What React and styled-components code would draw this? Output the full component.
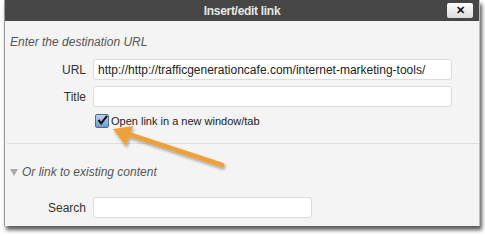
import styled, { createGlobalStyle } from "styled-components";

const GlobalStyle = createGlobalStyle`
  html, body {
    margin: 0;
    padding: 0;
    background: #fff;
  }
  body {
    font-family: "Liberation Sans", Arial, sans-serif;
  }
`;

export default function App() {
  return (
    <>
      <GlobalStyle />
      <Page>
        <Dialog>
          <Header>
            <HeaderTitle>Insert/edit link</HeaderTitle>
            <CloseButton>✕</CloseButton>
          </Header>
          <Body>
            <Section>
              <Hint>Enter the destination URL</Hint>
              <FieldGrid>
                <Label>URL</Label>
                <TextInput
                  defaultValue="http://http://trafficgenerationcafe.com/internet-marketing-tools/"
                  $width="359px"
                />
                <Label>Title</Label>
                <TextInput defaultValue="" $width="359px" />
                <span />
                <CheckRow>
                  <CheckBox>
                    <svg width="11" height="10" viewBox="0 0 11 10">
                      <path
                        d="M1.5 5 L4.2 8.3 L10 0.8"
                        fill="none"
                        stroke="#111"
                        strokeWidth="2"
                      />
                    </svg>
                  </CheckBox>
                  <CheckLabel>Open link in a new window/tab</CheckLabel>
                </CheckRow>
              </FieldGrid>
            </Section>
            <Divider />
            <Section $top="20px">
              <Toggle>
                <Triangle />
                <Hint>Or link to existing content</Hint>
              </Toggle>
              <FieldGrid $top="17px">
                <Label>Search</Label>
                <TextInput defaultValue="" $width="219px" />
              </FieldGrid>
            </Section>
          </Body>
          <Arrow width="130" height="60" viewBox="0 0 130 60">
            <defs>
              <filter id="sh" x="-20%" y="-40%" width="140%" height="180%">
                <feDropShadow dx="1" dy="2" stdDeviation="1.5" floodColor="#000" floodOpacity="0.35" />
              </filter>
            </defs>
            <g filter="url(#sh)">
              <line x1="117" y1="43" x2="20" y2="11" stroke="#eea13a" strokeWidth="5" strokeLinecap="round" />
              <polygon points="8,7 28,4 21,24" fill="#eea13a" />
            </g>
          </Arrow>
        </Dialog>
      </Page>
    </>
  );
}

const Page = styled.div`
  width: 485px;
  height: 236px;
  padding-left: 4px;
  box-sizing: border-box;
`;

const Dialog = styled.div`
  position: relative;
  width: 476px;
  height: 226px;
  background: #f4f4f4;
  border-left: 1px solid #9a9a9a;
  border-right: 1px solid #bdbdbd;
  box-sizing: border-box;
  box-shadow: 2px 4px 4px rgba(0, 0, 0, 0.65);
  display: flex;
  flex-direction: column;
`;

const Header = styled.div`
  height: 21px;
  background: #464646;
  display: flex;
  align-items: center;
  justify-content: center;
  position: relative;
`;

const HeaderTitle = styled.span`
  color: #e6e6e6;
  font-size: 12px;
  font-weight: bold;
  letter-spacing: -0.3px;
`;

const CloseButton = styled.span`
  position: absolute;
  right: 6px;
  top: 3px;
  width: 26px;
  height: 15px;
  border-radius: 2px;
  background: linear-gradient(#fdfdfd, #dcdcdc);
  color: #111;
  font-size: 11px;
  font-weight: bold;
  display: flex;
  align-items: center;
  justify-content: center;
  line-height: 1;
`;

const Body = styled.div`
  display: flex;
  flex-direction: column;
  padding-top: 13px;
`;

const Section = styled.div`
  padding: ${(p) => p.$top || "0"} 0 0 5px;
`;

const Hint = styled.div`
  font-size: 12px;
  font-style: italic;
  color: #555;
  line-height: 16px;
`;

const FieldGrid = styled.div`
  display: grid;
  grid-template-columns: 76px auto;
  column-gap: 7px;
  row-gap: 6px;
  align-items: center;
  margin-top: ${(p) => p.$top || "9px"};
`;

const Label = styled.div`
  text-align: right;
  font-size: 12px;
  color: #333;
`;

const TextInput = styled.input`
  width: ${(p) => p.$width};
  height: 21px;
  box-sizing: border-box;
  border: 1px solid #dcdcdc;
  border-radius: 3px;
  background: #fff;
  font-family: "Liberation Sans", Arial, sans-serif;
  font-size: 12px;
  color: #222;
  padding: 0 4px;
  outline: none;
`;

const CheckRow = styled.div`
  display: flex;
  align-items: center;
  gap: 2px;
  margin-left: 2px;
  margin-top: 1px;
`;

const CheckBox = styled.span`
  width: 12px;
  height: 12px;
  border: 1px solid #4a6b94;
  border-radius: 2px;
  background: linear-gradient(#bcd3ee, #6e9bd3);
  display: flex;
  align-items: center;
  justify-content: center;
  svg {
    margin-top: -2px;
    margin-left: 1px;
  }
`;

const CheckLabel = styled.span`
  font-size: 11px;
  color: #222;
`;

const Divider = styled.div`
  height: 1px;
  background: #dedede;
  margin: 15px 0 0 2px;
`;

const Toggle = styled.div`
  display: flex;
  align-items: center;
  gap: 4px;
`;

const Triangle = styled.span`
  width: 0;
  height: 0;
  border-left: 4px solid transparent;
  border-right: 4px solid transparent;
  border-top: 7px solid #a8a8a8;
`;

const Arrow = styled.svg`
  position: absolute;
  left: 100px;
  top: 122px;
  overflow: visible;
`;
